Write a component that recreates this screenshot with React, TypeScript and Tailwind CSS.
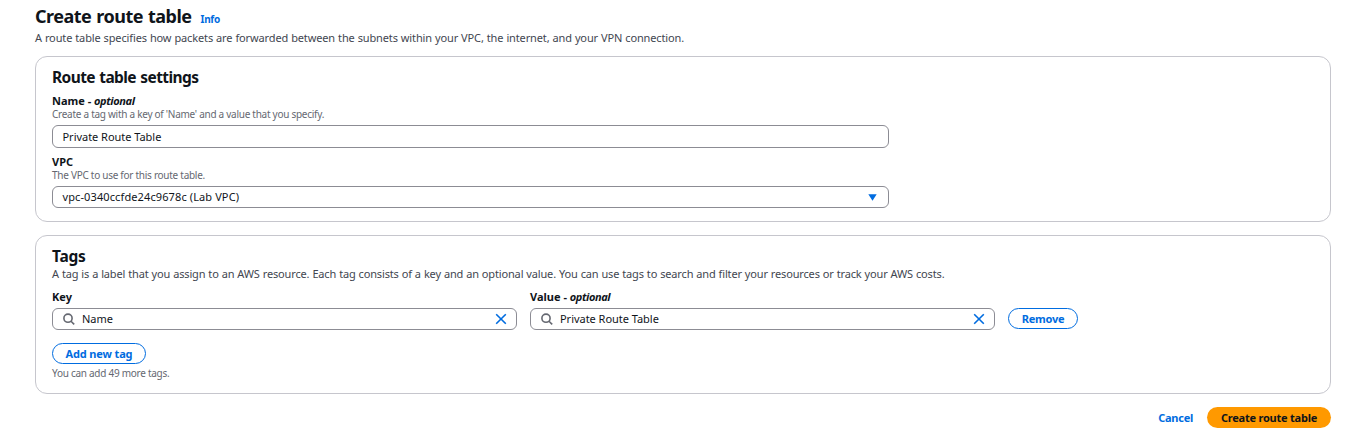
import type { ReactNode } from 'react';

function Label({ children, optional, className = '' }: { children: ReactNode; optional?: boolean; className?: string }) {
  return (
    <div className={`h-[14px] whitespace-nowrap text-[11px] font-bold leading-[14px] ${className}`}>
      {children}
      {optional && <> - <i className="tracking-[-0.4px]">optional</i></>}
    </div>
  );
}

function Hint({ children, className = '' }: { children: ReactNode; className?: string }) {
  return (
    <div className={`h-[13px] whitespace-nowrap text-[10px] leading-[13px] tracking-[-0.27px] text-[#656871] ${className}`}>{children}</div>
  );
}

function SearchIcon() {
  return (
    <svg className="ml-[10px] mr-[7px] h-3 w-3 shrink-0" viewBox="0 0 12 12" fill="none" stroke="#656871" strokeWidth="1.6">
      <circle cx="5" cy="5.2" r="4.1" />
      <path d="M8 8.2l3.2 3.2" />
    </svg>
  );
}

function CloseIcon() {
  return (
    <svg className="ml-auto mr-[9px] h-3 w-3 shrink-0" viewBox="0 0 12 12" fill="none" stroke="#006ce0" strokeWidth="1.6">
      <path d="M1.2 1.2l9.6 9.6M10.8 1.2l-9.6 9.6" />
    </svg>
  );
}

function SearchField({ value }: { value: string }) {
  return (
    <div className="flex h-[22px] w-[465px] items-center rounded-[6px] border border-[#8c8c94]">
      <SearchIcon />
      <span className="text-[11px] leading-[14px] tracking-[-0.03px]">{value}</span>
      <CloseIcon />
    </div>
  );
}

export default function App() {
  return (
    <main className="h-[436px] overflow-hidden bg-white pl-[35px] pr-[35px] pt-[5px] font-['Noto_Sans',sans-serif] text-[#0f141a]">
      <header className="h-[51px]">
        <div className="flex h-[22px] items-baseline gap-[9px]">
          <h1 className="whitespace-nowrap text-[18px] font-bold leading-[22px] tracking-[-0.5px] [word-spacing:0.8px]">Create route table</h1>
          <a className="text-[10px] font-bold leading-[14px] tracking-[-0.3px] text-[#006ce0]">Info</a>
        </div>
        <p className="mt-1 whitespace-nowrap text-[11px] leading-[14px] tracking-[-0.13px] text-[#424650] [word-spacing:0.3px]">
          A route table specifies how packets are forwarded between the subnets within your VPC, the internet, and your VPN connection.
        </p>
      </header>

      <section className="h-[166px] w-[1296px] rounded-[12px] border border-[#c6c6cd] px-4 pt-[9px]">
        <h2 className="h-[23px] whitespace-nowrap text-[15.5px] font-bold leading-[22px] tracking-[-0.58px] [word-spacing:0.8px]">Route table settings</h2>
        <Label optional className="mt-[5px]">Name</Label>
        <Hint>Create a tag with a key of 'Name' and a value that you specify.</Hint>
        <div className="mt-1 flex h-[23px] w-[837px] items-center rounded-[6px] border border-[#8c8c94] pl-[9.5px]">
          <span className="text-[11px] leading-[14px] tracking-[-0.03px]">Private Route Table</span>
        </div>
        <Label className="mt-[7px]">VPC</Label>
        <Hint>The VPC to use for this route table.</Hint>
        <div className="mt-1 flex h-[22px] w-[837px] items-center justify-between rounded-[6px] border border-[#8c8c94] pl-[9.5px] pr-[11px]">
          <span className="text-[11px] leading-[14px] tracking-[0.11px]">vpc-0340ccfde24c9678c (Lab VPC)</span>
          <svg className="h-[7px] w-[9px]" viewBox="0 0 9 7"><path d="M.3.3h8.4L4.5 6.8z" fill="#006ce0" /></svg>
        </div>
      </section>

      <section className="mt-[13px] h-[159px] w-[1296px] rounded-[12px] border border-[#c6c6cd] px-4 pt-[10px]">
        <h2 className="h-[21px] text-[15.5px] font-bold leading-[21px] tracking-[-0.3px]">Tags</h2>
        <p className="h-[14px] whitespace-nowrap text-[11px] leading-[14px] tracking-[-0.153px] text-[#424650] [word-spacing:0.3px]">
          A tag is a label that you assign to an AWS resource. Each tag consists of a key and an optional value. You can use tags to search and filter your resources or track your AWS costs.
        </p>
        <div className="mt-[9px] flex items-end gap-[13px]">
          <div className="flex flex-col gap-1">
            <Label>Key</Label>
            <SearchField value="Name" />
          </div>
          <div className="flex flex-col gap-1">
            <Label optional>Value</Label>
            <SearchField value="Private Route Table" />
          </div>
          <button className="mb-px h-[21px] w-[70px] rounded-full border border-[#006ce0] text-[11px] font-bold leading-[19px] tracking-[-0.25px] text-[#006ce0]">Remove</button>
        </div>
        <button className="mt-[13px] block h-[21px] w-[94px] rounded-full border border-[#006ce0] text-[11px] font-bold leading-[19px] tracking-[-0.15px] text-[#006ce0]">Add new tag</button>
        <Hint className="mt-[3px]">You can add 49 more tags.</Hint>
      </section>

      <footer className="mt-[13px] flex w-[1296px] items-center justify-end gap-[14px]">
        <button className="text-[11px] font-bold leading-[21px] tracking-[-0.25px] text-[#006ce0]">Cancel</button>
        <button className="h-[21px] w-[124px] whitespace-nowrap rounded-full bg-[#ff9900] text-[11px] font-bold leading-[21px] tracking-[-0.22px]">Create route table</button>
      </footer>
    </main>
  );
}
